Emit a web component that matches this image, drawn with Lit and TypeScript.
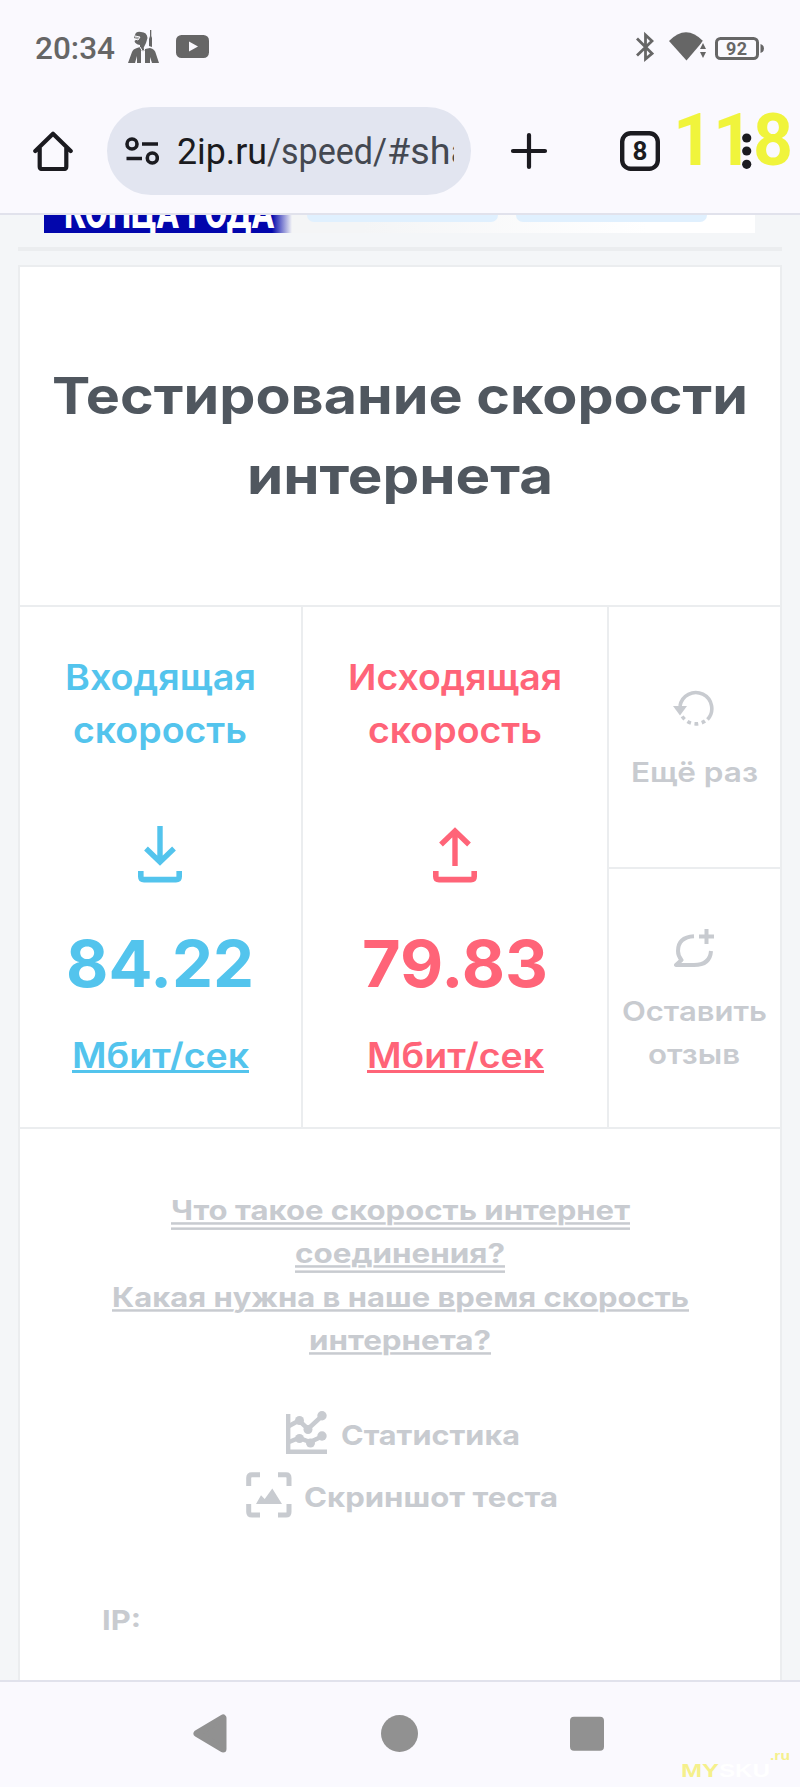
import { LitElement, html, css, svg, nothing } from "lit";
import { customElement, property } from "lit/decorators.js";

/** One line of text set to a measured width, with an optional underline. */
@customElement("fit-line")
class FitLine extends LitElement {
  @property() text = "";
  @property({ type: Number }) w = 100;
  @property({ type: Number }) h = 40;
  @property({ type: Number }) base = 30;
  @property({ type: Number }) size = 28;
  @property({ type: Number }) weight = 600;
  @property() family = "Inter";
  @property({ type: Number }) line = 0;
  @property({ type: Number }) second = 0;
  @property({ type: Number }) thick = 2.5;
  @property({ type: Boolean }) skip = false;

  static styles = css`
    :host { display: block; flex: none; }
    svg { display: block; overflow: visible; }
    text { fill: currentColor; }
    .skip { stroke: #fff; stroke-width: 2.8px; paint-order: stroke; }
    rect { fill: currentColor; }
  `;

  render() {
    return html`<svg width=${this.w} height=${this.h}>
      ${this.line ? svg`<rect x="0" y=${this.base + this.line} width=${this.w} height=${this.thick}></rect>` : nothing}
      <text class=${this.skip ? "skip" : "plain"} x="0" y=${this.base} font-family="${this.family}, sans-serif"
        font-size=${this.size} font-weight=${this.weight} textLength=${this.w} lengthAdjust="spacingAndGlyphs">${this.text}</text>
      ${this.second ? svg`<rect x="0" y=${this.base + this.second} width=${this.w} height=${this.thick}></rect>` : nothing}
    </svg>`;
  }
}

@customElement("app-root")
class AppRoot extends LitElement {
  static styles = css`
    :host { display: block; width: 800px; height: 1787px; overflow: hidden; font-family: Roboto, sans-serif; background: #f4f6f8; }
    * { box-sizing: border-box; }
    svg { display: block; flex: none; }
    .screen { display: flex; flex-direction: column; height: 1787px; }
    .status { height: 95px; background: #faf9fe; display: flex; align-items: flex-start; padding: 27px 36px 0 35px; color: #666; }
    .status .pubg { margin-left: 13px; }
    .status .yt { margin-left: 16px; }
    .status .bt { margin-left: auto; }
    .status .wifi { margin-left: 15px; }
    .status .bat { margin-left: 8px; }
    .bar { height: 120px; background: #faf9fe; border-bottom: 2px solid #e1e2ec; display: flex; align-items: flex-start; padding: 12px 0 0 33px; position: relative; }
    .bar > svg { margin-top: 24px; }
    .pill { width: 364px; height: 88px; margin-left: 34px; border-radius: 44px; background: #e2e5f0; display: flex; align-items: center; padding: 0 17px 0 18px; }
    .url { margin-left: 18px; width: 277px; height: 88px; overflow: hidden; color: #444851; display: flex; }
    .url .host { color: #1b1b20; }
    .plus { margin-left: 38px; }
    .tabs { margin-left: 71px; }
    .mark { position: absolute; left: 673px; top: 0; color: #f0f43c; }
    .dots { position: absolute; left: 741px; top: 38px; }
    .bar > .dots { margin: 0; }
    .page { flex: 1; min-height: 0; overflow: hidden; padding: 0 18px; }
    .banner { height: 18px; margin: 0 27px 0 26px; overflow: hidden; display: flex; background: linear-gradient(90deg, #f4f5f6 0 45%, #fff 85%); }
    .blue { width: 248px; height: 18px; overflow: hidden; padding-left: 20px; background: linear-gradient(90deg, #0206ac 0 228px, #f4f5f6 248px); color: #fff; }
    .chip { height: 7px; width: 191px; margin-left: 15px; background: #e0f0fe; border-radius: 0 0 9px 9px; }
    .chip + .chip { margin-left: 18px; }
    .rule { height: 4px; background: #ebedef; margin-top: 14px; }
    .card { margin-top: 14px; border: 2px solid #ebedef; background: #fff; height: 1500px; }
    .title { height: 338px; padding-top: 94px; display: flex; flex-direction: column; align-items: center; color: #50575f; }
    .grid { height: 524px; display: grid; grid-template-columns: 283px 306px 171px; border-top: 2px solid #ebedef; border-bottom: 2px solid #ebedef; }
    .col { border-right: 2px solid #ebedef; display: flex; flex-direction: column; align-items: center; padding-top: 45px; }
    .down { color: #53c4ed; padding-right: 1px; }
    .up { color: #ff6478; }
    .col svg { margin-top: 67px; }
    .num { margin-top: 38px; }
    .side { display: flex; flex-direction: column; color: #c8cbd0; }
    .cell { flex: 1; display: flex; flex-direction: column; align-items: center; padding-right: 1px; }
    .again { flex: none; height: 262px; border-bottom: 2px solid #ebedef; padding-top: 83px; }
    .review { padding-top: 60px; }
    .links { color: #c8cbd0; padding-top: 61px; display: flex; flex-direction: column; align-items: center; }
    .tool { display: flex; justify-content: center; }
    .stat { margin-top: 47px; margin-left: 6px; gap: 14px; }
    .shot { margin-top: 18px; margin-left: 3px; gap: 12px; }
    .ip { align-self: flex-start; margin: 83px 0 0 82px; }
    .nav { height: 107px; border-top: 2px solid #e1e2ec; background: #faf9fe; position: relative; display: flex; justify-content: center; gap: 151px; padding: 31px 1px 0 0; }
    .wm { position: absolute; right: 10px; bottom: 7px; display: flex; align-items: flex-start; }
    .wm .y { color: #f5f08c; }
    .wm .w { color: #fff; }
    .wm .ru { margin-top: -5px; color: #f5f08c; }
  `;

  private arrow(up: boolean) {
    return html`<svg width="44" height="58" viewBox="0 0 44 58" fill="none" stroke="currentColor">
      ${up
        ? svg`<path d="M22 41V7M8 19.5L22 6L36 19.5" stroke-width="5.4"></path>`
        : svg`<path d="M22 1V37M8 23.5L22 37L36 23.5" stroke-width="5.4"></path>`}
      <path d="M2.8 46V51.5Q2.8 54.6 6 54.6H38Q41.2 54.6 41.2 51.5V46" stroke-width="5.6"></path>
    </svg>`;
  }

  render() {
    return html`<div class="screen">
      <div class="status">
        <fit-line text="20:34" family="Roboto" weight="500" size="31" w="80" h="40" base="31.5"></fit-line>
        <svg class="pubg" width="32" height="36" viewBox="0 0 32 36" fill="#666">
          <path d="M7 8Q8 4 13 5Q19 5 19.5 11L18 16L16 20Q15 22 17 22L22 21Q27 22 28 27L31 36H24L22 30V36H17V23L15 25L13 23V36H9V29L7 36H0L4 25Q5 22 9 21L12 20V18Q7 17 6.5 14L9 12L6 11Z"></path>
          <path d="M22 3H23.3V9L24 11V20L21 19V12L22 9Z"></path>
          <path d="M7 9L12 10L10 13L7 12" stroke="#faf9fe" stroke-width="1" fill="#aaa"></path>
          <path d="M12 20L15 25L18 20M15 25V36" stroke="#faf9fe" fill="none"></path>
        </svg>
        <svg class="yt" width="33" height="34" viewBox="0 0 33 34"><rect y="8" width="33" height="23" rx="5.5" fill="#666"></rect><path d="M13 14.5L22 19.5L13 24.5Z" fill="#faf9fe"></path></svg>
        <svg class="bt" width="18" height="36" viewBox="0 0 18 36" fill="none" stroke="#666" stroke-width="2.8"><path d="M1 11.5L16 26.5L9.5 32V8L16 14L1 28.5"></path></svg>
        <svg class="wifi" width="38" height="36" viewBox="0 0 38 36" fill="#666"><path d="M0 14Q17 -3.5 34 14L29 20L17.5 33.5Z"></path><path d="M29.5 22L33.5 14L39 22V33H29.5Z" fill="#faf9fe"></path><path d="M31 22L34 16L37 22ZM31 25H37L34 31Z"></path></svg>
        <svg class="bat" width="49" height="36" viewBox="0 0 49 36"><rect x="1.5" y="11.5" width="41" height="20" rx="4" fill="none" stroke="#666" stroke-width="3"></rect><path d="M45.5 17Q49 18 49 21.5Q49 25 45.5 26Z" fill="#666"></path><text x="11" y="28" font-size="18" font-weight="700" font-family="Roboto" textLength="21" fill="#666">92</text></svg>
      </div>

      <div class="bar">
        <svg width="40" height="40" viewBox="0 0 40 40" fill="none" stroke="#1b1b20" stroke-width="4.2" stroke-linejoin="round" stroke-linecap="round"><path d="M2.3 20L20 2.8L37.7 20M6.7 17V35.5Q6.7 38 9 38H31Q33.3 38 33.3 35.5V17"></path></svg>
        <div class="pill">
          <svg width="34" height="28" viewBox="0 0 34 28" fill="none" stroke="#1b1b20" stroke-width="3.6"><circle cx="7" cy="7" r="5"></circle><path d="M17 7H33M1.5 21.5H17"></path><circle cx="27.3" cy="21" r="5"></circle></svg>
          <div class="url">
            <fit-line class="host" text="2ip.ru" family="Roboto" weight="400" size="36" w="90" h="88" base="56.5"></fit-line>
            <fit-line text="/speed/" family="Roboto" weight="400" size="36" w="120" h="88" base="56.5"></fit-line>
            <fit-line text="#sha" family="Roboto" weight="400" size="36" w="84" h="88" base="56.5"></fit-line>
          </div>
        </div>
        <svg class="plus" width="40" height="40" viewBox="0 0 40 40" stroke="#1b1b20" stroke-width="4.2" stroke-linecap="round"><path d="M4 20H36M20 4V36"></path></svg>
        <svg class="tabs" width="40" height="40" viewBox="0 0 40 40"><rect x="2.2" y="2.2" width="35.6" height="35.6" rx="8.5" fill="none" stroke="#1b1b20" stroke-width="4.4"></rect><text x="20" y="29" text-anchor="middle" font-family="Roboto" font-weight="700" font-size="26" fill="#1b1b20">8</text></svg>
        <fit-line class="mark" text="118" family="Roboto" weight="700" size="73" w="120" h="80" base="70"></fit-line>
        <svg class="dots" width="12" height="36" viewBox="0 0 12 36" fill="#1b1b20"><circle cx="5.7" cy="5" r="4.6"></circle><circle cx="5.7" cy="18" r="4.6"></circle><circle cx="5.7" cy="31.3" r="4.6"></circle></svg>
      </div>

      <div class="page">
        <div class="banner">
          <div class="blue"><fit-line text="КОНЦА ГОДА" family="Roboto" weight="800" size="46" w="210" h="18" base="12.8"></fit-line></div>
          <div class="chip"></div><div class="chip"></div>
        </div>
        <div class="rule"></div>
        <div class="card">
          <div class="title">
            <fit-line text="Тестирование скорости" weight="700" size="51" w="696" h="80" base="53"></fit-line>
            <fit-line text="интернета" weight="700" size="51" w="306" h="80" base="53"></fit-line>
          </div>
          <div class="grid">
            <div class="col down">
              <fit-line text="Входящая" weight="560" size="35.5" w="191" h="53" base="38"></fit-line>
              <fit-line text="скорость" weight="560" size="35.5" w="174" h="53" base="38"></fit-line>
              ${this.arrow(false)}
              <fit-line class="num" text="84.22" weight="700" size="65" w="188" h="80" base="66"></fit-line>
              <fit-line text="Мбит/сек" weight="560" size="35" w="177" h="50" base="66.5" line="2.5" thick="3"></fit-line>
            </div>
            <div class="col up">
              <fit-line text="Исходящая" weight="560" size="35.5" w="214" h="53" base="38"></fit-line>
              <fit-line text="скорость" weight="560" size="35.5" w="174" h="53" base="38"></fit-line>
              ${this.arrow(true)}
              <fit-line class="num" text="79.83" weight="700" size="65" w="186" h="80" base="66"></fit-line>
              <fit-line text="Мбит/сек" weight="560" size="35" w="177" h="50" base="66.5" line="2.5" thick="3"></fit-line>
            </div>
            <div class="side">
              <div class="cell again">
                <svg width="42" height="37" viewBox="0 0 42 37" fill="none" stroke="currentColor" stroke-width="3.6"><path d="M7 16A16 16 0 1 1 34.5 29.5"></path><path d="M32 31A16 16 0 0 1 8.5 25" stroke-dasharray="3.8 3.5"></path><path d="M0 16H14L7 25.5Z" fill="currentColor" stroke="none"></path></svg>
                <fit-line text="Ещё раз" size="27.5" w="127" h="43" base="54.5"></fit-line>
              </div>
              <div class="cell review">
                <svg width="40" height="38" viewBox="0 0 40 38" fill="none" stroke="currentColor" stroke-width="4"><path d="M20 7.2Q4 8 4 22Q4 27 7.5 31L2 36H20Q36 36 37 22" stroke-linejoin="round"></path><path d="M32.5 0V15M25 7.5H40"></path></svg>
                <fit-line text="Оставить" size="27.5" w="145" h="43" base="54"></fit-line>
                <fit-line text="отзыв" size="27.5" w="92" h="43" base="54"></fit-line>
              </div>
            </div>
          </div>
          <div class="links">
            <fit-line text="Что такое скорость интернет" weight="700" size="27" w="459" h="43.4" base="30.3" line="1.9" second="7.1" skip></fit-line>
            <fit-line text="соединения?" weight="700" size="27" w="210" h="43.4" base="30.3" line="1.9" second="7.1" skip></fit-line>
            <fit-line text="Какая нужна в наше время скорость" weight="700" size="27" w="577" h="43.4" base="30.3" line="1.9" skip></fit-line>
            <fit-line text="интернета?" weight="700" size="27" w="182" h="43.4" base="30.3" line="1.9" skip></fit-line>
            <div class="tool stat">
              <svg width="41" height="43" viewBox="0 0 41 43" fill="currentColor" stroke="currentColor"><path d="M2.2 3V40.8H41" fill="none" stroke-width="4.4"></path><path d="M3 15L13 9.5L22 18L36 5M3 31L13 27L24 31L36 25.5" fill="none" stroke-width="4.5"></path><g stroke="none"><circle cx="13.5" cy="9.5" r="4.5"></circle><circle cx="22" cy="18.5" r="4.5"></circle><circle cx="36" cy="4.7" r="4.7"></circle><circle cx="13.5" cy="27.5" r="4.5"></circle><circle cx="24.5" cy="32" r="4.5"></circle><circle cx="36" cy="25" r="4.7"></circle></g></svg>
              <fit-line text="Статистика" weight="700" size="27.5" w="179" h="43" base="34"></fit-line>
            </div>
            <div class="tool shot">
              <svg width="46" height="46" viewBox="0 0 46 46" fill="none" stroke="currentColor" stroke-width="5"><path d="M2.7 14V6Q2.7 2.7 6 2.7H14M32 2.7H40Q43 2.7 43 6V14M43 32V40Q43 43 40 43H32M14 43H6Q2.7 43 2.7 40V32"></path><path d="M10 32L15 23.3L18.7 27L26.3 16.5L36 32Z" fill="currentColor" stroke="none"></path></svg>
              <fit-line text="Скриншот теста" weight="700" size="27.5" w="254" h="46" base="35"></fit-line>
            </div>
            <fit-line class="ip" text="IP:" weight="700" size="27.5" w="39" h="40" base="29"></fit-line>
          </div>
        </div>
      </div>

      <div class="nav">
        <svg width="37" height="41" viewBox="0 0 37 41"><path d="M4 20.5L30 5V36Z" fill="#919191" stroke="#919191" stroke-width="7" stroke-linejoin="round"></path></svg>
        <svg width="37" height="41" viewBox="0 0 37 41"><circle cx="18.5" cy="20.5" r="18.5" fill="#919191"></circle></svg>
        <svg width="37" height="41" viewBox="0 0 37 41"><rect x="1" y="3.7" width="34" height="34" rx="4" fill="#919191"></rect></svg>
        <div class="wm">
          <fit-line class="y" text="MY" family="Liberation Sans" weight="700" size="19" w="38" h="18" base="15"></fit-line>
          <fit-line class="w" text="SKU" family="Liberation Sans" weight="700" size="19" w="51" h="18" base="15"></fit-line>
          <fit-line class="ru" text=".ru" family="Liberation Sans" weight="700" size="12" w="20" h="10" base="3"></fit-line>
        </div>
      </div>
    </div>`;
  }
}
